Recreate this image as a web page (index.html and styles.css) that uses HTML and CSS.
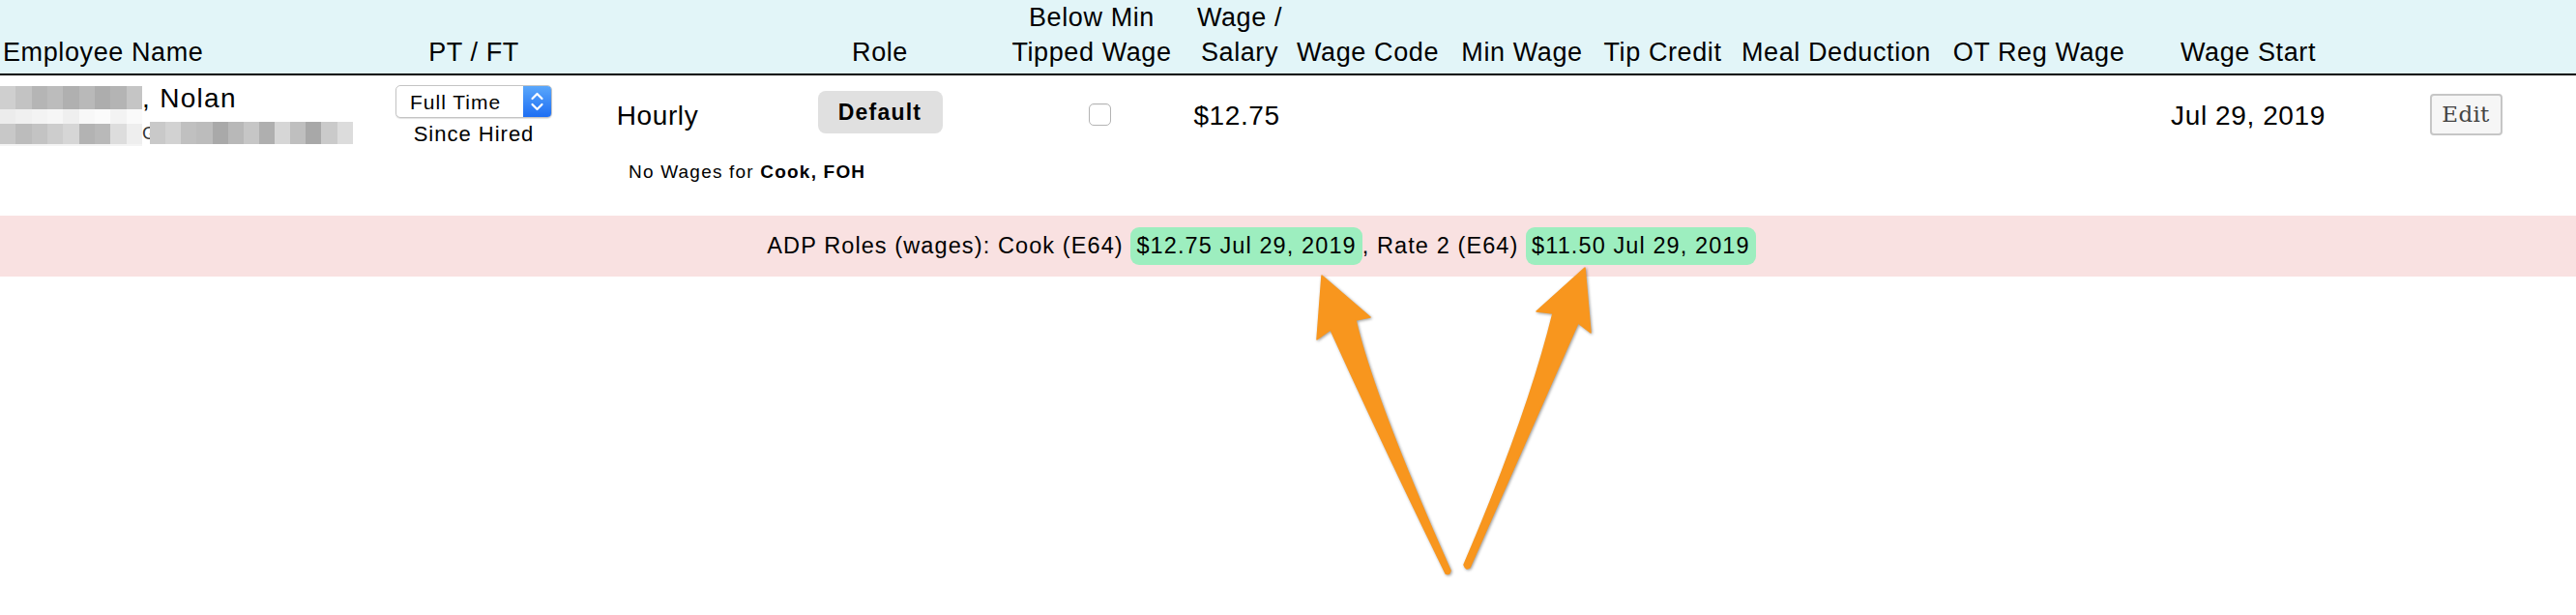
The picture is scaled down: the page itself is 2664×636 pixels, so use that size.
FILE: index.html
```html
<!DOCTYPE html>
<html>
<head>
<meta charset="utf-8">
<link rel="stylesheet" href="styles.css">
</head>
<body>
<div class="grid head">
  <div class="h h-name">Employee Name</div>
  <div class="h">PT / FT</div>
  <div class="h"></div>
  <div class="h">Role</div>
  <div class="h">Below Min<br>Tipped Wage</div>
  <div class="h">Wage /<br>Salary</div>
  <div class="h">Wage Code</div>
  <div class="h">Min Wage</div>
  <div class="h">Tip Credit</div>
  <div class="h">Meal Deduction</div>
  <div class="h">OT Reg Wage</div>
  <div class="h">Wage Start</div>
  <div class="h"></div>
  <div class="h"></div>
</div>
<div class="grid body">
  <div class="c-nowage">No Wages for <b>Cook, FOH</b></div>
  <div class="c-name">
    <div class="mosaic">
      <div class="m-r1"></div>
      <div class="m-r2"></div>
      <div class="m-r3"></div>
      <div class="m-r4"></div>
    </div>
    <div class="name-main">
      <div class="nolan">, Nolan</div>
      <div class="name-sub"><span class="g">G</span><span class="m-2"></span></div>
    </div>
  </div>
  <div class="c-ptft">
    <div class="select">
      <span class="select-text">Full Time</span>
      <span class="stepper"><svg width="29" height="32" viewBox="0 0 29 32"><polyline points="9.5,13 14.5,8 19.5,13" fill="none" stroke="#fff" stroke-width="2.2" stroke-linecap="round" stroke-linejoin="round"/><polyline points="9.5,19 14.5,24 19.5,19" fill="none" stroke="#fff" stroke-width="2.2" stroke-linecap="round" stroke-linejoin="round"/></svg></span>
    </div>
    <div class="since">Since Hired</div>
  </div>
  <div class="c txt">Hourly</div>
  <div class="c"><span class="btn-default">Default</span></div>
  <div class="c"><span class="checkbox"></span></div>
  <div class="c txt wage">$12.75</div>
  <div class="c"></div>
  <div class="c"></div>
  <div class="c"></div>
  <div class="c"></div>
  <div class="c"></div>
  <div class="c txt">Jul 29, 2019</div>
  <div class="c"><span class="btn-edit">Edit</span></div>
  <div class="c"></div>
</div>
<div class="adp">
  <div class="adp-inner">ADP Roles (wages): Cook (E64) <span class="pill">$12.75 Jul 29, 2019</span>, Rate 2 (E64) <span class="pill">$11.50 Jul 29, 2019</span></div>
</div>
<svg class="arrows" width="2664" height="636" viewBox="0 0 2664 636">
  <path class="arrow" d="M1367 285 L1417 328 L1402 331 Q1420 410 1500 590 Q1499 595 1495 593 Q1430 460 1376 341 L1362 351 Z"/>
  <path class="arrow" d="M1639 277 L1645 344 L1632 334 Q1590 430 1520 587 Q1516 590 1514 584 Q1580 430 1606 324 L1589 322 Z"/>
</svg>
</body>
</html>
```
FILE: styles.css
```css
* { box-sizing: border-box; }
html, body { margin: 0; padding: 0; }
body {
  width: 2664px;
  height: 636px;
  position: relative;
  overflow: hidden;
  background: #fff;
  color: #000;
  font-family: "Liberation Sans", Arial, sans-serif;
}
.grid {
  display: grid;
  grid-template-columns: 400px 180px 200px 260px 178px 128px 137px 182px 109px 250px 169px 264px 186px 1fr;
}
.head {
  height: 78px;
  background: #e2f5f8;
  border-bottom: 2px solid #000;
  font-size: 27px;
  letter-spacing: 0.6px;
  line-height: 36px;
}
.h {
  display: flex;
  align-items: flex-end;
  justify-content: center;
  text-align: center;
  white-space: nowrap;
  padding-bottom: 6px;
}
.h-name { justify-content: flex-start; padding-left: 3px; }

.body {
  grid-template-rows: 80px 65px;
}
.c {
  grid-row: 1;
  display: flex;
  align-items: center;
  justify-content: center;
  white-space: nowrap;
}
.txt {
  font-size: 28px;
  letter-spacing: 0.6px;
  line-height: 28px;
  padding-top: 4px;
}
.wage { padding-right: 6px; }
.c-nowage {
  grid-row: 2;
  grid-column: 3 / 5;
  padding-top: 9px;
  padding-left: 70px;
  font-size: 19px;
  letter-spacing: 1.2px;
  line-height: 22px;
  white-space: nowrap;
}
.c-name {
  grid-row: 1 / 3;
  display: flex;
  align-items: flex-start;
}
.mosaic {
  width: 147px;
  margin-top: 11px;
  display: flex;
  flex-direction: column;
}
.m-r1 {
  height: 24px;
  background: linear-gradient(90deg, #cfcfcf 0 16px, #c3c3c3 16px 33px, #b5b5b5 33px 49px, #bcbcbc 49px 65px, #b0b0b0 65px 82px, #b9b9b9 82px 98px, #adadad 98px 114px, #b4b4b4 114px 131px, #c5c5c5 131px 147px);
}
.m-r2 {
  height: 15px;
  background: linear-gradient(90deg, #ececec 0 16px, #f0f0f0 16px 33px, #f3f3f3 33px 49px, #f6f6f6 49px 65px, #efefef 65px 82px, #f8f8f8 82px 98px, #fbfbfb 98px 114px, #f3f3f3 114px 131px, #fafafa 131px 147px);
}
.m-r3 {
  height: 21px;
  background: linear-gradient(90deg, #c8c8c8 0 16px, #bcbcbc 16px 33px, #c3c3c3 33px 49px, #cdcdcd 49px 65px, #d6d6d6 65px 82px, #b3b3b3 82px 98px, #b9b9b9 98px 114px, #dddddd 114px 131px, #eeeeee 131px 147px);
}
.m-r4 { height: 2px; background: #f4f4f4; }
.name-main {
  padding-top: 11px;
  display: flex;
  flex-direction: column;
}
.nolan {
  font-size: 28px;
  line-height: 26px;
  letter-spacing: 1.3px;
  white-space: nowrap;
}
.name-sub {
  margin-top: 11px;
  height: 23px;
  display: flex;
  align-items: flex-end;
}
.g {
  font-size: 19px;
  line-height: 23px;
  color: #333;
  white-space: nowrap;
}
.m-2 {
  width: 210px;
  height: 23px;
  margin-left: -7px;
  background: linear-gradient(90deg, #c9c9c9 0 16px, #d2d2d2 16px 32px, #c0c0c0 32px 48px, #bcbcbc 48px 65px, #a9a9a9 65px 81px, #b8b8b8 81px 97px, #c6c6c6 97px 113px, #afafaf 113px 129px, #d6d6d6 129px 145px, #bfbfbf 145px 161px, #a8a8a8 161px 177px, #cacaca 177px 194px, #dcdcdc 194px 210px);
}
.c-ptft {
  grid-row: 1 / 3;
  display: flex;
  flex-direction: column;
  align-items: center;
  padding-top: 10px;
}
.select {
  width: 162px;
  height: 34px;
  display: flex;
  border: 1px solid #c4c4c4;
  border-radius: 5px;
  background: #fff;
  box-shadow: 0 1px 1px rgba(0, 0, 0, 0.12);
  overflow: hidden;
}
.select-text {
  flex: 1;
  font-size: 21px;
  letter-spacing: 1px;
  padding-left: 14px;
  line-height: 34px;
  white-space: nowrap;
}
.stepper {
  width: 29px;
  display: flex;
  background: linear-gradient(#5aa7fb, #1d6ef3);
}
.since {
  margin-top: 4px;
  font-size: 22px;
  letter-spacing: 1px;
  line-height: 26px;
  white-space: nowrap;
}
.btn-default {
  width: 129px;
  height: 44px;
  display: flex;
  align-items: center;
  justify-content: center;
  background: #e0e0e0;
  border-radius: 8px;
  font-weight: bold;
  font-size: 23px;
  letter-spacing: 1.2px;
  margin-top: -4px;
}
.checkbox {
  width: 23px;
  height: 23px;
  border: 1px solid #b4b4b4;
  border-radius: 5px;
  background: #fff;
  box-shadow: inset 0 1px 1px rgba(0, 0, 0, 0.06);
  margin-left: 17px;
}
.btn-edit {
  width: 75px;
  height: 43px;
  display: flex;
  align-items: center;
  justify-content: center;
  background: #f6f6f6;
  border: 2px solid #c6c6c6;
  border-radius: 4px;
  font-family: "DejaVu Serif", "Liberation Serif", serif;
  font-size: 23px;
  color: #444;
  letter-spacing: 0.3px;
}
.adp {
  height: 63px;
  background: #f9e1e1;
  display: flex;
  align-items: center;
  justify-content: center;
  padding-right: 55px;
}
.adp-inner {
  font-size: 23.5px;
  letter-spacing: 1.1px;
  line-height: 39px;
  white-space: nowrap;
}
.pill {
  display: inline-block;
  background: #9deebf;
  border-radius: 9px;
  padding: 0 6px;
  line-height: 39px;
}
.arrows {
  position: absolute;
  left: 0;
  top: 0;
  pointer-events: none;
}
.arrow {
  fill: #f8961e;
  stroke: #f8961e;
  stroke-width: 1.5;
  stroke-linejoin: round;
  filter: drop-shadow(1px 1px 1.5px rgba(0, 0, 0, 0.4));
}
```
